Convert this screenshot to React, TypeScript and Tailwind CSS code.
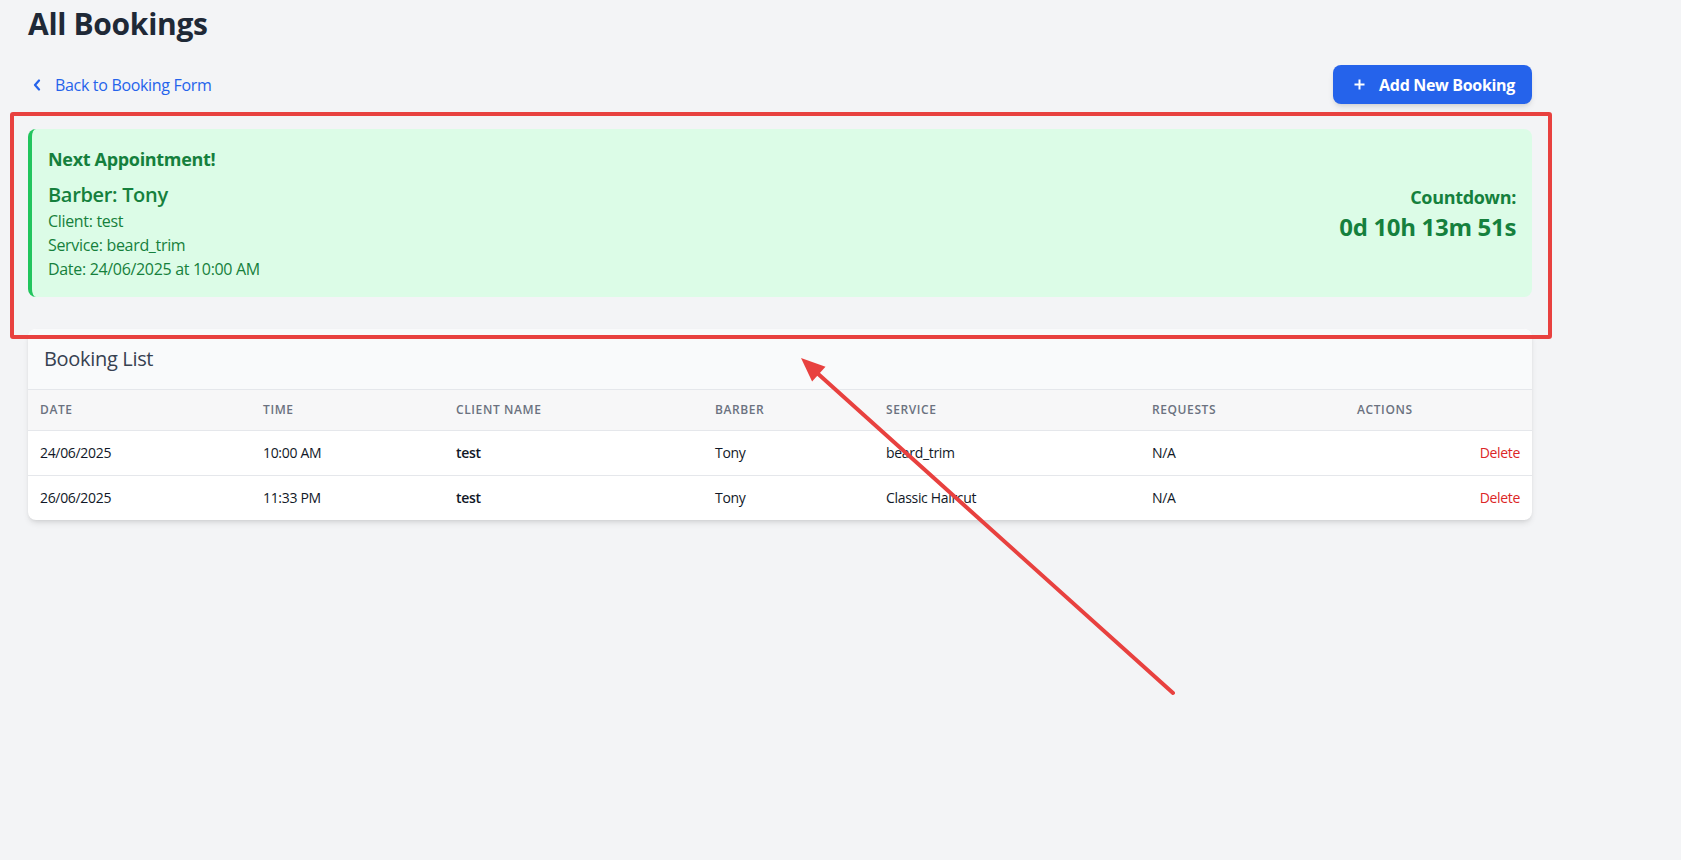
import React from "react";

const rows = [
  { date: "24/06/2025", time: "10:00 AM", client: "test", barber: "Tony", service: "beard_trim", requests: "N/A" },
  { date: "26/06/2025", time: "11:33 PM", client: "test", barber: "Tony", service: "Classic Haircut", requests: "N/A" },
];

export default function App() {
  return (
    <div className="relative min-h-screen bg-[#f3f4f6] font-['Open_Sans',sans-serif] tracking-[-0.02em]">
      <div className="ml-[28px] w-[1504px] pt-[6px]">
        <h1 className="text-3xl font-bold leading-9 text-[#1f2937]">All Bookings</h1>

        <div className="mt-[23px] flex items-center justify-between">
          <a className="flex items-center gap-[14px] pl-[5px] text-base text-[#2563eb]">
            <svg width="8" height="12" viewBox="0 0 8 12" fill="none">
              <path d="M6 1.5 2 6l4 4.5" stroke="currentColor" strokeWidth="2.2" strokeLinecap="round" strokeLinejoin="round" />
            </svg>
            <span>Back to Booking Form</span>
          </a>
          <button className="flex h-[39px] items-center gap-[14px] rounded-lg bg-[#2563eb] pl-[21px] pr-[17px] text-base font-bold text-white shadow-md">
            <svg width="11" height="11" viewBox="0 0 11 11">
              <path d="M5.5 0.5v10M0.5 5.5h10" stroke="currentColor" strokeWidth="2" />
            </svg>
            <span>Add New Booking</span>
          </button>
        </div>

        <div className="mt-[25px] flex h-[168px] items-center justify-between rounded-lg border-l-4 border-[#22c55e] bg-[#dcfce7] p-4">
          <div className="flex flex-col">
            <h2 className="text-lg font-bold leading-7 text-[#15803d]">Next Appointment!</h2>
            <p className="mt-2 text-xl font-semibold leading-7 text-[#15803d]">Barber: Tony</p>
            <p className="text-base leading-6 text-[#16803c]">Client: test</p>
            <p className="text-base leading-6 text-[#16803c]">Service: beard_trim</p>
            <p className="text-base leading-6 text-[#16803c]">Date: 24/06/2025 at 10:00 AM</p>
          </div>
          <div className="flex flex-col items-end">
            <p className="text-lg font-bold leading-7 text-[#15803d]">Countdown:</p>
            <p className="text-2xl font-bold leading-8 text-[#15803d]">0d 10h 13m 51s</p>
          </div>
        </div>

        <div className="mt-8 overflow-hidden rounded-lg bg-white shadow-md">
          <div className="border-b border-[#e5e7eb] bg-[#f9fafb] px-4 py-4">
            <h3 className="text-xl font-medium leading-7 text-[#374151]">Booking List</h3>
          </div>
          <table className="w-full table-fixed">
            <thead className="border-b border-[#e5e7eb] bg-[#f7f7f8]">
              <tr className="text-left text-xs font-semibold uppercase tracking-wider text-[#6b7280]">
                <th className="w-[223px] px-3 py-3 font-semibold">Date</th>
                <th className="w-[193px] px-3 py-3 font-semibold">Time</th>
                <th className="w-[259px] px-3 py-3 font-semibold">Client Name</th>
                <th className="w-[171px] px-3 py-3 font-semibold">Barber</th>
                <th className="w-[266px] px-3 py-3 font-semibold">Service</th>
                <th className="w-[205px] px-3 py-3 font-semibold">Requests</th>
                <th className="px-3 py-3 font-semibold">Actions</th>
              </tr>
            </thead>
            <tbody className="divide-y divide-[#e5e7eb]">
              {rows.map((r, i) => (
                <tr key={i} className="text-sm leading-5 text-[#111827]">
                  <td className="px-3 py-3">{r.date}</td>
                  <td className="px-3 py-3">{r.time}</td>
                  <td className="px-3 py-3 font-semibold">{r.client}</td>
                  <td className="px-3 py-3">{r.barber}</td>
                  <td className="px-3 py-3">{r.service}</td>
                  <td className="px-3 py-3">{r.requests}</td>
                  <td className="px-3 py-3 text-right font-medium text-[#dc2626]">Delete</td>
                </tr>
              ))}
            </tbody>
          </table>
        </div>
      </div>

      {/* annotation overlay */}
      <div className="pointer-events-none absolute left-[10px] top-[112px] h-[227px] w-[1542px] rounded-[3px] border-4 border-[#e8413f]" />
      <svg className="pointer-events-none absolute left-0 top-0" width="1681" height="860">
        <line x1="1173" y1="693" x2="816" y2="372" stroke="#e8413f" strokeWidth="4" strokeLinecap="round" />
        <polygon points="801,358 825.5,366.7 812.1,381.5" fill="#e8413f" />
      </svg>
    </div>
  );
}
